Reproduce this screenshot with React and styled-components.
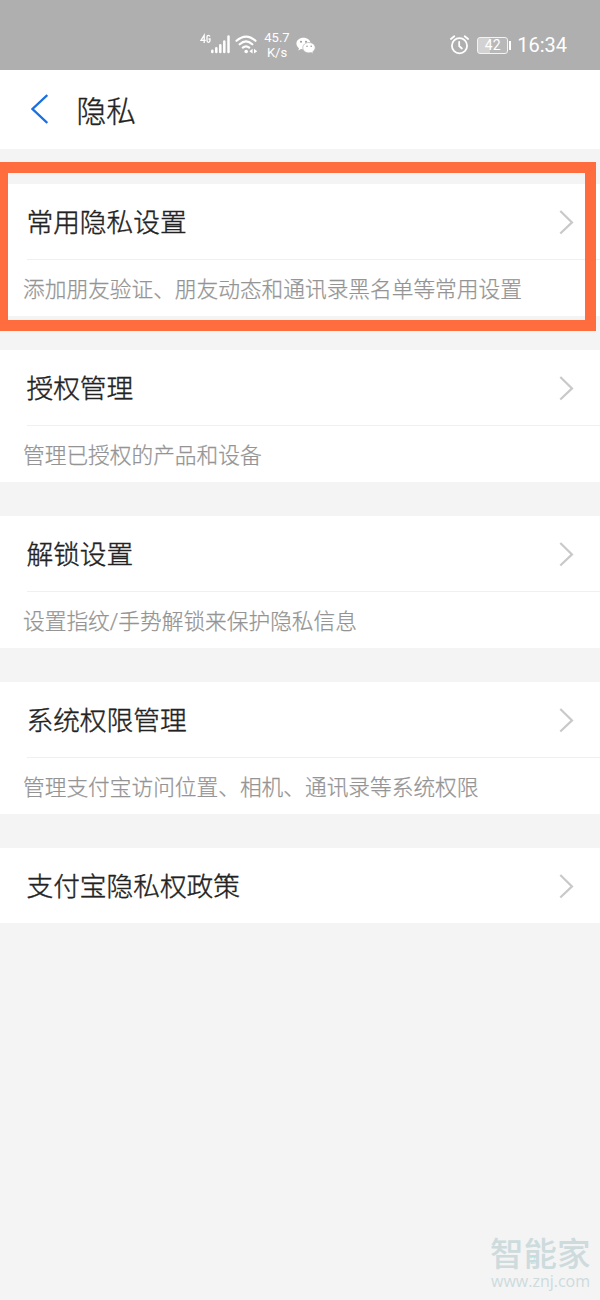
import React from "react";
import styled, { createGlobalStyle } from "styled-components";

const GlobalStyle = createGlobalStyle`
  * { box-sizing: border-box; }
  body { margin: 0; background: #f4f4f4; }
`;

const Screen = styled.div`
  position: relative;
  width: 600px;
  height: 1300px;
  overflow: hidden;
  background: #f4f4f4;
  font-family: Roboto, "Noto Sans CJK SC", sans-serif;
  font-weight: 300;
`;

const StatusBar = styled.div`
  display: flex;
  justify-content: space-between;
  height: 70px;
  padding: 20px 33px 0 200px;
  background: #afafaf;
  color: #fff;
`;

const StatusGroup = styled.div`
  display: flex;
  align-items: center;
  height: 50px;
`;

const StatusIcon = styled.svg`
  display: block;
  flex: none;
  margin-left: ${(p) => p.$gap || 0}px;
  overflow: visible;
`;

const Speed = styled.div`
  width: 26px;
  margin-left: 6px;
  font-size: 13px;
  line-height: 15px;
  font-weight: 400;
  text-align: center;
`;

const Battery = styled.div`
  display: flex;
  align-items: center;
  margin-left: 8px;
`;

const BatteryBody = styled.div`
  width: 31px;
  height: 17px;
  border: 1.5px solid #f3f3f3;
  border-radius: 3px;
  background: linear-gradient(90deg, #d2d2d2 42%, #b8b8b8 42%);
  font-size: 14px;
  line-height: 15px;
  font-weight: 400;
  text-align: center;
`;

const BatteryTip = styled.div`
  width: 2px;
  height: 9px;
  margin-left: 1px;
  background: #fff;
`;

const Clock = styled.div`
  margin-left: 6px;
  font-size: 20px;
  font-weight: 400;
  line-height: 50px;
`;

const Header = styled.header`
  display: flex;
  align-items: center;
  height: 79px;
  padding: 0 0 1px 31px;
  background: #fff;
`;

const Title = styled.h1`
  margin: 5px 0 0 28.5px;
  color: #222;
  font-size: 29.7px;
  line-height: 44px;
  font-weight: 300;
  -webkit-text-stroke: 0.35px currentColor;
`;

const List = styled.main`
  display: flex;
  flex-direction: column;
  gap: 34px;
  padding-top: 35px;
`;

const Card = styled.section`
  background: #fff;
`;

const Row = styled.div`
  display: flex;
  align-items: center;
  justify-content: space-between;
  height: 75px;
  padding: 0 26px 0 26.5px;
`;

const RowLabel = styled.div`
  margin-top: 2px;
  color: #222;
  font-size: 26.7px;
  line-height: 40px;
  font-weight: 300;
  -webkit-text-stroke: 0.4px currentColor;
`;

const Description = styled.div`
  height: 57px;
  margin-left: 27px;
  border-top: 1px solid #f0f0f0;
  color: #949494;
  font-size: 21.7px;
  line-height: 59px;
  text-indent: -4px;
  white-space: nowrap;
  -webkit-text-stroke: 0.25px currentColor;
`;

const Highlight = styled.div`
  position: absolute;
  left: 0;
  top: 162px;
  width: 596px;
  height: 169px;
  border: 11px solid #ff6d3f;
  border-left-width: 8px;
`;

const Watermark = styled.div`
  position: absolute;
  left: 490px;
  top: 1236px;
  width: 104px;
  color: #cddbdd;
`;

const Brand = styled.div`
  font-size: 33.5px;
  line-height: 38px;
  font-weight: 500;
  white-space: nowrap;
`;

const Site = styled.div`
  margin-left: 1px;
  font-family: "Open Sans", sans-serif;
  font-size: 16px;
  line-height: 14px;
  font-weight: 400;
`;

const PageMark = styled.span`
  position: absolute;
  left: 40px;
  top: 19px;
  color: #a6e3e4;
  font-size: 10px;
  line-height: 12px;
`;

const SignalIcon = () => (
  <StatusIcon width="31" height="22" viewBox="0 0 31 22">
    <g fill="none" stroke="#fff" strokeWidth="1.3">
      <path d="M4.2 9V1.2L1 6.3H5.7" />
      <path d="M10 2.6Q9.5 1.3 8.5 1.3Q7 1.3 7 3V6.5Q7 8.3 8.5 8.3Q10 8.3 10 6.5V5H8.5" />
    </g>
    <path d="M12.3 18V16.8M16.3 18V14.3M20.3 18V11.3M24.3 18V7.5M28.5 18V2.5" fill="none" stroke="#fff" strokeWidth="2.5" strokeLinecap="round" />
  </StatusIcon>
);

const WifiIcon = () => (
  <StatusIcon $gap={4} width="23" height="22" viewBox="0 0 23 22">
    <path d="M1.5 6.8Q11 -1.7 20.5 6.8M4.7 10.3Q11 4.6 17.3 10.3M7.8 13.6Q11 11 14.2 13.6" fill="none" stroke="#fff" strokeWidth="2.2" strokeLinecap="round" />
    <circle cx="11.2" cy="17.5" r="1.8" fill="#fff" />
    <path d="M17.6 14.8V19.6L14.4 17.2ZM19 14.8V19.6L22.2 17.2Z" fill="#fff" />
  </StatusIcon>
);

const WechatIcon = () => (
  <StatusIcon $gap={6} width="20" height="17" viewBox="0 0 20 17">
    <path d="M7.5.8C3.4.8.4 3.4.4 6.6c0 1.9 1 3.5 2.6 4.6L2.3 13.4 5 12.1c.8.2 1.6.3 2.5.3 4 0 7.1-2.6 7.1-5.8S11.5.8 7.5.8Z" fill="#fff" />
    <path d="M13 5.5c-3.5 0-6.2 2.3-6.2 5.2s2.7 5.2 6.2 5.2c.8 0 1.5-.1 2.1-.3l2.2 1.1-.6-1.9c1.4-.9 2.5-2.4 2.5-4.1 0-2.9-2.7-5.2-6.2-5.2Z" fill="#fff" stroke="#afafaf" strokeWidth=".7" />
    <g fill="#999">
      <circle cx="5" cy="4.8" r="1" /><circle cx="10" cy="4.8" r="1" />
      <circle cx="11" cy="9.2" r=".8" /><circle cx="15.2" cy="9.2" r=".8" />
    </g>
  </StatusIcon>
);

const AlarmIcon = () => (
  <StatusIcon width="20" height="20" viewBox="0 0 20 20">
    <g fill="none" stroke="#fff" strokeWidth="1.8" strokeLinecap="round">
      <circle cx="10.5" cy="10.7" r="7.6" />
      <path d="M1.9 4 5.3 1.3M15.7 1.3 19.1 4M10.2 7V11L12.9 13.5" />
    </g>
  </StatusIcon>
);

const BackIcon = () => (
  <svg width="17" height="30" viewBox="0 0 17 30">
    <path d="M16.3 1 1.5 15 16.3 29" fill="none" stroke="#1a70e2" strokeWidth="2.3" />
  </svg>
);

const Chevron = () => (
  <svg width="15" height="26" viewBox="0 0 15 26">
    <path d="M1.3 2 13 13.4 1.3 24.5" fill="none" stroke="#c9c9c9" strokeWidth="2.2" />
  </svg>
);

const items = [
  ["常用隐私设置", "添加朋友验证、朋友动态和通讯录黑名单等常用设置"],
  ["授权管理", "管理已授权的产品和设备"],
  ["解锁设置", "设置指纹/手势解锁来保护隐私信息"],
  ["系统权限管理", "管理支付宝访问位置、相机、通讯录等系统权限"],
  ["支付宝隐私权政策", null],
];

export default function App() {
  return (
    <Screen lang="zh-CN">
      <GlobalStyle />
      <StatusBar>
        <StatusGroup>
          <SignalIcon />
          <WifiIcon />
          <Speed>45.7<br />K/s</Speed>
          <WechatIcon />
        </StatusGroup>
        <StatusGroup>
          <AlarmIcon />
          <Battery>
            <BatteryBody>42</BatteryBody>
            <BatteryTip />
          </Battery>
          <Clock>16:34</Clock>
        </StatusGroup>
      </StatusBar>
      <Header>
        <BackIcon />
        <Title>隐私</Title>
      </Header>
      <List>
        {items.map(([label, description]) => (
          <Card key={label}>
            <Row>
              <RowLabel>{label}</RowLabel>
              <Chevron />
            </Row>
            {description && <Description>{description}</Description>}
          </Card>
        ))}
      </List>
      <Highlight />
      <Watermark>
        <Brand>智能家</Brand>
        <Site>www.znj.com</Site>
        <PageMark>2</PageMark>
      </Watermark>
    </Screen>
  );
}
